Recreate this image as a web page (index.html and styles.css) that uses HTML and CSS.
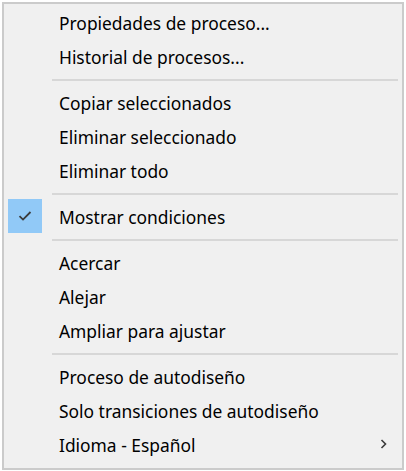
FILE: index.html
```html
<!DOCTYPE html>
<html lang="es">
<head>
<meta charset="utf-8">
<title>Menú</title>
<link rel="stylesheet" href="styles.css">
</head>
<body>
<div class="menu">
  <div class="item"><span class="gutter"></span><span class="label">Propiedades de proceso...</span></div>
  <div class="item"><span class="gutter"></span><span class="label">Historial de procesos...</span></div>
  <div class="sep"></div>
  <div class="item"><span class="gutter"></span><span class="label">Copiar seleccionados</span></div>
  <div class="item"><span class="gutter"></span><span class="label">Eliminar seleccionado</span></div>
  <div class="item"><span class="gutter"></span><span class="label">Eliminar todo</span></div>
  <div class="sep"></div>
  <div class="item"><span class="gutter checked"><svg width="14" height="12" viewBox="0 0 14 12"><path d="M1.5 6.2 L5 9.6 L12.5 2" fill="none" stroke="#3a3a3a" stroke-width="1.8"/></svg></span><span class="label">Mostrar condiciones</span></div>
  <div class="sep"></div>
  <div class="item"><span class="gutter"></span><span class="label">Acercar</span></div>
  <div class="item"><span class="gutter"></span><span class="label">Alejar</span></div>
  <div class="item"><span class="gutter"></span><span class="label">Ampliar para ajustar</span></div>
  <div class="sep"></div>
  <div class="item"><span class="gutter"></span><span class="label">Proceso de autodiseño</span></div>
  <div class="item"><span class="gutter"></span><span class="label">Solo transiciones de autodiseño</span></div>
  <div class="item"><span class="gutter"></span><span class="label">Idioma - Español</span><span class="arrow"><svg width="7" height="10" viewBox="0 0 7 10"><path d="M1.5 1 L5.5 5 L1.5 9" fill="none" stroke="#3a3a3a" stroke-width="1.6"/></svg></span></div>
</div>
</body>
</html>
```

FILE: styles.css
```css
html, body {
  margin: 0;
  padding: 0;
  background: #ffffff;
}
body {
  padding: 2px;
  font-family: "Noto Sans", "Open Sans", sans-serif;
  font-size: 17.4px;
  color: #000;
}
.menu {
  width: 398px;
  height: 460px;
  border: 2px solid #cbcbcb;
  background: #f0f0f0;
  padding: 1px 0 3px 0;
  box-sizing: content-box;
  display: flex;
  flex-direction: column;
}
.menu > * { flex: none; }
.item {
  height: 34px;
  display: flex;
  align-items: center;
}
.gutter {
  width: 34px;
  height: 34px;
  margin-left: 4px;
  margin-right: 17px;
  display: flex;
  align-items: center;
  justify-content: center;
}
.gutter.checked {
  background: #91c9f7;
}
.label {
  flex: 1;
  white-space: nowrap;
  line-height: 34px;
  padding-top: 1px;
}
.arrow {
  width: 7px;
  margin-right: 15px;
  display: flex;
  align-items: center;
}
.sep {
  height: 2px;
  margin: 6px 4px 4px 48px;
  background: #d7d7d7;
}
```
